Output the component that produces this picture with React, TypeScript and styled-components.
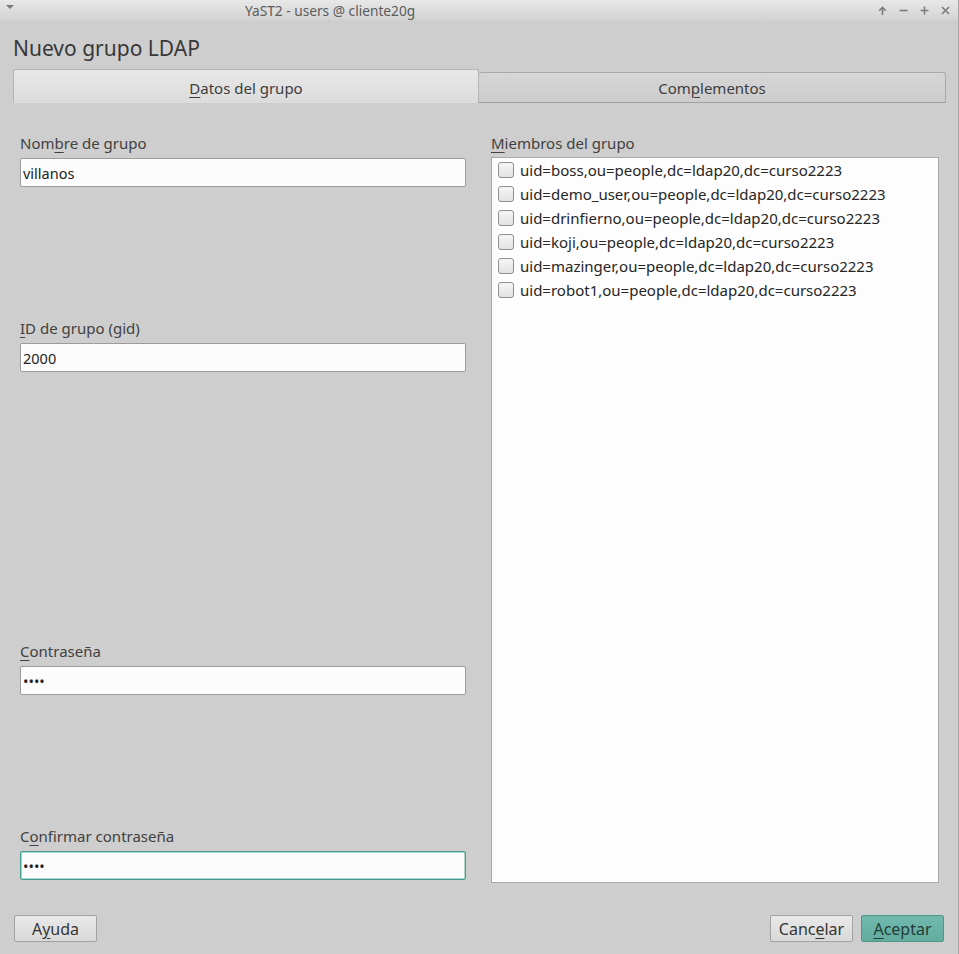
import styled, { createGlobalStyle } from 'styled-components';

const GlobalStyle = createGlobalStyle`
  html, body {
    margin: 0;
    padding: 0;
  }
  body {
    font-family: "Noto Sans", "Open Sans", sans-serif;
    background: #cecece;
    color: #3d3d3d;
  }
  u {
    text-decoration: underline;
    text-underline-offset: 3px;
    text-decoration-thickness: 1px;
  }
`;

const Window = styled.div`
  width: 959px;
  height: 954px;
  display: flex;
  flex-direction: column;
  box-sizing: border-box;
  border-right: 1px solid #a6a6a6;
  overflow: hidden;
`;

const TitleBar = styled.div`
  height: 20px;
  display: flex;
  align-items: center;
  background: linear-gradient(#e8e8e8, #d3d3d3);
  padding: 0 8px 0 6px;
`;

const MenuArrow = styled.div`
  width: 0;
  height: 0;
  border-left: 4px solid transparent;
  border-right: 4px solid transparent;
  border-top: 4px solid #7a7a7a;
  margin-top: -6px;
`;

const WindowTitle = styled.div`
  flex: 1;
  padding-left: 231px;
  font-size: 13.7px;
  color: #5c5c5c;
`;

const WinButtons = styled.div`
  display: flex;
  gap: 12px;
  align-items: center;
`;

const Heading = styled.h1`
  margin: 0;
  padding: 13px 13px 0;
  font-size: 21px;
  font-weight: 400;
  line-height: 30px;
  color: #383838;
`;

const TabRow = styled.div`
  display: flex;
  align-items: flex-end;
  height: 34px;
  margin-top: 6px;
  padding-left: 13px;
`;

const Tab = styled.div<{ $active?: boolean }>`
  box-sizing: border-box;
  width: ${(p) => (p.$active ? '466px' : '467px')};
  height: ${(p) => (p.$active ? '34px' : '31px')};
  display: flex;
  align-items: center;
  justify-content: center;
  font-size: 15px;
  color: #3d3d3d;
  border: 1px solid ${(p) => (p.$active ? '#b4b4b4' : '#a9a9a9')};
  border-bottom: ${(p) => (p.$active ? 'none' : '1px solid #a0a0a0')};
  border-left: ${(p) => (p.$active ? '1px solid #b4b4b4' : 'none')};
  border-radius: 3px 3px 0 0;
  background: ${(p) =>
    p.$active ? 'linear-gradient(#e8e8e8, #dcdcdc)' : 'linear-gradient(#d6d6d6, #cdcdcd)'};
  padding-top: ${(p) => (p.$active ? '3px' : '0')};
`;

const Body = styled.div`
  height: 780px;
  box-sizing: border-box;
  display: grid;
  grid-template-columns: 446px 448px;
  column-gap: 25px;
  padding: 30px 0 0 20px;
`;

const Column = styled.div`
  display: flex;
  flex-direction: column;
`;

const Field = styled.div<{ $space: number }>`
  display: flex;
  flex-direction: column;
  margin-top: ${(p) => p.$space}px;
`;

const Label = styled.label`
  font-size: 15px;
  line-height: 21px;
  color: #414141;
  margin-bottom: 4px;
`;

const TextInput = styled.input<{ $focused?: boolean }>`
  box-sizing: border-box;
  height: 29px;
  width: 100%;
  margin: 0;
  padding: 0 2px;
  font-family: "Noto Sans", "Open Sans", sans-serif;
  font-size: 14.5px;
  color: #232323;
  background: #fcfcfc;
  border: 1px solid ${(p) => (p.$focused ? '#3f9e8e' : '#9c9c9c')};
  box-shadow: ${(p) => (p.$focused ? 'inset 0 0 0 0.5px #5fb0a2' : 'none')};
  border-radius: 2px;
  outline: none;
`;

const ListLabel = styled(Label)`
  margin-bottom: 3px;
`;

const MemberList = styled.div`
  box-sizing: border-box;
  height: 726px;
  background: #fdfdfd;
  border: 1px solid #a8a8a8;
  padding: 0 6px;
  display: flex;
  flex-direction: column;
`;

const MemberRow = styled.div`
  height: 24px;
  display: flex;
  align-items: center;
  gap: 6px;
  font-size: 15px;
  color: #262626;
`;

const CheckBox = styled.span`
  box-sizing: border-box;
  width: 16px;
  height: 16px;
  border: 1px solid #8e8e8e;
  border-radius: 3px;
  background: linear-gradient(#f6f6f6, #e2e2e2);
`;

const Footer = styled.div`
  display: flex;
  align-items: center;
  padding: 32px 14px 0 14px;
  gap: 8px;
`;

const Spacer = styled.div`
  flex: 1;
`;

const Button = styled.button<{ $primary?: boolean; $w: number }>`
  box-sizing: border-box;
  width: ${(p) => p.$w}px;
  height: 27px;
  padding: 0;
  display: flex;
  align-items: center;
  justify-content: center;
  font-family: "Noto Sans", "Open Sans", sans-serif;
  font-size: 16px;
  color: ${(p) => (p.$primary ? '#253d39' : '#353535')};
  border: 1px solid ${(p) => (p.$primary ? '#4f978b' : '#a2a2a2')};
  border-radius: 2px;
  background: ${(p) =>
    p.$primary ? 'linear-gradient(#71b9ad, #62ab9f)' : 'linear-gradient(#e9e9e9, #d9d9d9)'};
`;

const Icon = ({ kind }: { kind: 'up' | 'min' | 'max' | 'close' }) => (
  <svg width="9" height="9" viewBox="0 0 9 9" fill="none" stroke="#7c7c7c" strokeWidth="1.6">
    {kind === 'up' && (
      <>
        <path d="M4.5 9V2" />
        <path d="M1.2 4.8L4.5 1.5L7.8 4.8" />
      </>
    )}
    {kind === 'min' && <path d="M0.5 4.5H8.5" />}
    {kind === 'max' && <path d="M0.5 4.5H8.5M4.5 0.5V8.5" />}
    {kind === 'close' && <path d="M1 1L8 8M8 1L1 8" />}
  </svg>
);

const members = ['boss', 'demo_user', 'drinfierno', 'koji', 'mazinger', 'robot1'];

export default function App() {
  return (
    <>
      <GlobalStyle />
      <Window>
        <TitleBar>
          <MenuArrow />
          <WindowTitle>YaST2 - users @ cliente20g</WindowTitle>
          <WinButtons>
            <Icon kind="up" />
            <Icon kind="min" />
            <Icon kind="max" />
            <Icon kind="close" />
          </WinButtons>
        </TitleBar>

        <Heading>Nuevo grupo LDAP</Heading>

        <TabRow>
          <Tab $active>
            <span><u>D</u>atos del grupo</span>
          </Tab>
          <Tab>
            <span>Com<u>p</u>lementos</span>
          </Tab>
        </TabRow>

        <Body>
          <Column>
            <Field $space={0}>
              <Label>Nom<u>b</u>re de grupo</Label>
              <TextInput readOnly value="villanos" />
            </Field>
            <Field $space={131}>
              <Label><u>I</u>D de grupo (gid)</Label>
              <TextInput readOnly value="2000" />
            </Field>
            <Field $space={269}>
              <Label><u>C</u>ontraseña</Label>
              <TextInput readOnly type="password" value="abcd" />
            </Field>
            <Field $space={131}>
              <Label>C<u>o</u>nfirmar contraseña</Label>
              <TextInput readOnly type="password" value="abcd" $focused />
            </Field>
          </Column>

          <Column>
            <ListLabel><u>M</u>iembros del grupo</ListLabel>
            <MemberList>
              {members.map((m) => (
                <MemberRow key={m}>
                  <CheckBox />
                  <span>uid={m},ou=people,dc=ldap20,dc=curso2223</span>
                </MemberRow>
              ))}
            </MemberList>
          </Column>
        </Body>

        <Footer>
          <Button $w={83}>
            <span>A<u>y</u>uda</span>
          </Button>
          <Spacer />
          <Button $w={83}>
            <span>Canc<u>e</u>lar</span>
          </Button>
          <Button $w={83} $primary>
            <span><u>A</u>ceptar</span>
          </Button>
        </Footer>
      </Window>
    </>
  );
}
